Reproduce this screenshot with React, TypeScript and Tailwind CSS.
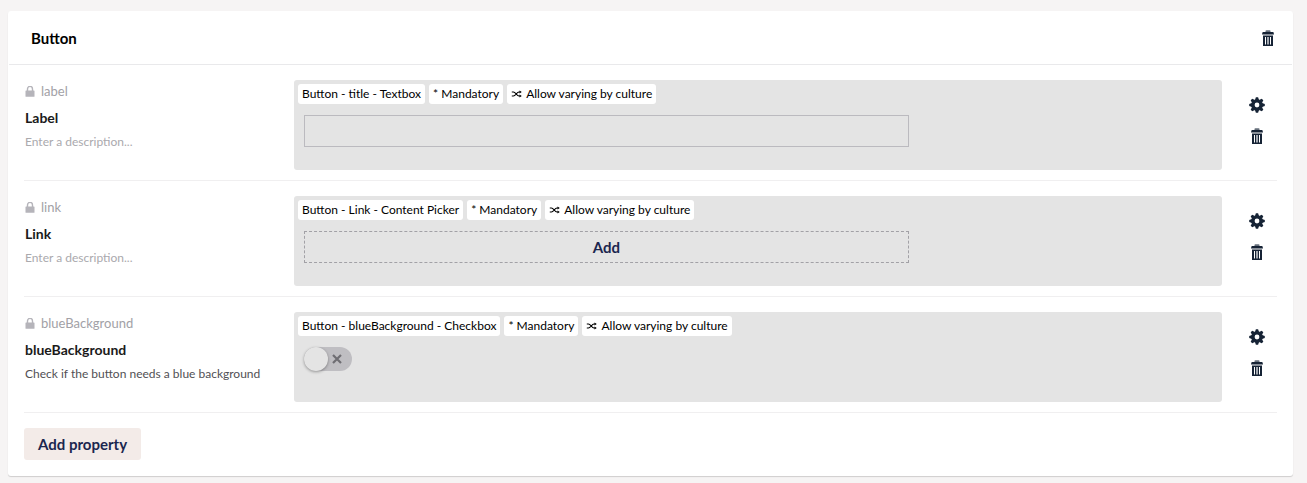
import React from "react";

type IconProps = { className?: string };

function TrashIcon({ className }: IconProps) {
  return (
    <svg viewBox="0 0 14 16" className={className} fill="currentColor" aria-hidden="true">
      <path d="M4.5 2.2 V1 Q4.5 0.2 5.3 0.2 H8.7 Q9.5 0.2 9.5 1 V2.2 Z" opacity="0.65" />
      <path d="M2.2 2 H11.8 Q12.4 2 12.6 2.6 L13 4.6 H1 L1.4 2.6 Q1.6 2 2.2 2 Z" />
      <path d="M2 5.6 H12 V16 H2 Z M4 7 V14.6 H5 V7 Z M6 7 V14.6 H6.6 V7 Z M7.4 7 V14.6 H8 V7 Z M9 7 V14.6 H10 V7 Z" fillRule="evenodd" />
    </svg>
  );
}

function GearIcon({ className }: IconProps) {
  return (
    <svg viewBox="-8 -8 16 16" className={className} fill="currentColor" aria-hidden="true">
      <path d="M0 -5.8 A5.8 5.8 0 1 0 0 5.8 A5.8 5.8 0 1 0 0 -5.8 Z M0 -2.4 A2.4 2.4 0 1 1 0 2.4 A2.4 2.4 0 1 1 0 -2.4 Z" fillRule="evenodd" />
      {[0, 45, 90, 135, 180, 225, 270, 315].map((angle) => (
        <path key={angle} transform={`rotate(${angle})`} d="M-2 -5 L-1.1 -7.8 H1.1 L2 -5 Z" />
      ))}
    </svg>
  );
}

function LockIcon({ className }: IconProps) {
  return (
    <svg viewBox="0 0 10 12" className={className} aria-hidden="true">
      <path d="M2.5 5 V2.9 A2.5 2.5 0 0 1 7.5 2.9 V5" fill="none" stroke="currentColor" strokeWidth="1.4" />
      <rect x="0.5" y="4.4" width="9" height="6.4" rx="0.6" fill="currentColor" />
    </svg>
  );
}

function ShuffleIcon({ className }: IconProps) {
  return (
    <svg viewBox="0 0 11 8" className={className} aria-hidden="true">
      <path d="M0.8 2 H2.4 C4.8 2 5.6 6 8 6 H9 M0.8 6 H2.4 C4.8 6 5.6 2 8 2 H9" fill="none" stroke="currentColor" strokeWidth="1.1" />
      <path d="M8.5 0.5 L10.8 2 L8.5 3.5 Z M8.5 4.5 L10.8 6 L8.5 7.5 Z" fill="currentColor" />
    </svg>
  );
}

function Tag({ children }: { children: React.ReactNode }) {
  return (
    <li className="flex h-5 items-center rounded-[3px] bg-white px-1 text-xs whitespace-nowrap text-black">
      {children}
    </li>
  );
}

type Property = {
  alias: string;
  name: string;
  description: string;
  editor: string;
  preview: React.ReactNode;
};

const properties: Property[] = [
  {
    alias: "label",
    name: "Label",
    description: "",
    editor: "Button - title - Textbox",
    preview: (
      <input
        type="text"
        aria-label="Label value"
        className="block h-8 w-full max-w-[605px] border border-[#bbbabf] bg-transparent px-2 text-sm"
      />
    ),
  },
  {
    alias: "link",
    name: "Link",
    description: "",
    editor: "Button - Link - Content Picker",
    preview: (
      <button
        type="button"
        className="block h-8 w-full max-w-[605px] border border-dashed border-[#a2a1a6] text-[15px] leading-5 font-bold text-[#1b264f]"
      >
        Add
      </button>
    ),
  },
  {
    alias: "blueBackground",
    name: "blueBackground",
    description: "Check if the button needs a blue background",
    editor: "Button - blueBackground - Checkbox",
    preview: (
      <label className="relative flex h-6 w-12 items-center rounded-full bg-[#bfbec2]">
        <input type="checkbox" role="switch" aria-label="blueBackground value" className="absolute inset-0 opacity-0" />
        <span className="size-6 rounded-full bg-[#e4e4e4] shadow-[0_1px_3px_rgba(0,0,0,0.35)]" />
        <svg viewBox="0 0 10 10" className="ml-1 size-[10px] text-[#6f6e73]" aria-hidden="true">
          <path d="M1 1 L9 9 M9 1 L1 9" stroke="currentColor" strokeWidth="2.2" />
        </svg>
      </label>
    ),
  },
];

function PropertyRow({ property }: { property: Property }) {
  return (
    <li className="flex border-b border-[#f0eff0] pt-[15px] pb-[10px]">
      <div className="w-[270px] shrink-0 pr-4 pl-px">
        <div className="flex h-6 items-center gap-[6px] text-[13px] text-[#a2a1a6]">
          <LockIcon className="h-3 w-[10px] text-[#b5b4ba]" />
          {property.alias}
        </div>
        <input
          aria-label={`Name of ${property.alias}`}
          defaultValue={property.name}
          className="mt-px block h-6 w-full text-sm font-bold text-[#1a1a1a]"
        />
        <input
          aria-label={`Description of ${property.alias}`}
          placeholder="Enter a description..."
          defaultValue={property.description}
          className="mt-[2px] block h-5 w-full text-xs text-[#515054] placeholder:text-[#aaa9ad]"
        />
      </div>
      <div className="h-[90px] min-w-0 flex-1 rounded-[3px] bg-[#e4e4e4] p-1">
        <ul className="flex gap-1">
          <Tag>{property.editor}</Tag>
          <Tag>* Mandatory</Tag>
          <Tag>
            <ShuffleIcon className="mr-1 h-2 w-[11px]" />
            Allow varying by culture
          </Tag>
        </ul>
        <div className="mt-[11px] px-[6px]">{property.preview}</div>
      </div>
      <div className="flex w-[55px] shrink-0 flex-col items-center gap-[15px] pt-[17px] pl-[15px]">
        <button type="button" aria-label={`Settings for ${property.alias}`} className="text-[#162335]">
          <GearIcon className="size-4" />
        </button>
        <button type="button" aria-label={`Delete ${property.alias}`} className="text-[#162335]">
          <TrashIcon className="h-4 w-[14px]" />
        </button>
      </div>
    </li>
  );
}

export default function App() {
  return (
    <main className="min-h-screen bg-[#f6f4f4] pt-[11px] pr-[14px] pb-[7px] pl-2 font-['Lato',sans-serif]">
      <section className="rounded-[3px] bg-white shadow-[0_1px_1px_rgba(0,0,0,0.16)]">
        <header className="mx-px flex h-[54px] items-center justify-between border-b border-[#e9e9eb] pr-[17px] pl-[22px]">
          <h2 className="text-[15px] leading-5 font-bold text-black">Button</h2>
          <button type="button" aria-label="Delete group" className="text-[#162335]">
            <TrashIcon className="h-4 w-[14px]" />
          </button>
        </header>
        <div className="px-4 pb-4">
          <ul>
            {properties.map((property) => (
              <PropertyRow key={property.alias} property={property} />
            ))}
          </ul>
          <button
            type="button"
            className="mt-[15px] block h-8 rounded-[3px] bg-[#f3ebe8] px-[14px] text-[15px] leading-5 font-bold text-[#1b264f]"
          >
            Add property
          </button>
        </div>
      </section>
    </main>
  );
}
